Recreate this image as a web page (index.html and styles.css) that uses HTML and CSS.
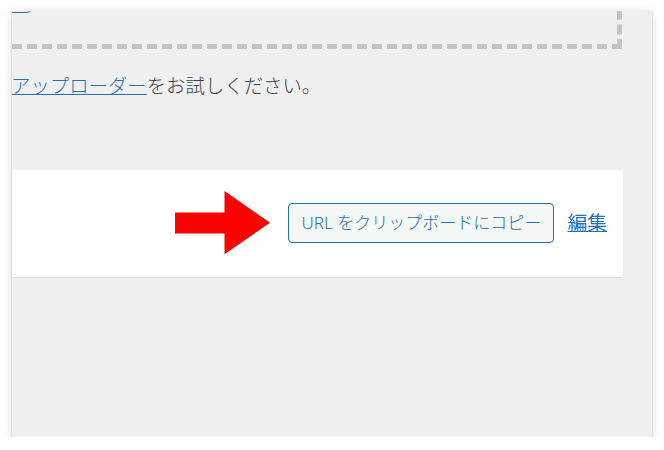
FILE: index.html
```html
<!DOCTYPE html>
<html lang="ja">
<head>
<meta charset="utf-8">
<title>メディアのアップロード</title>
<link rel="stylesheet" href="styles.css">
</head>
<body>
  <div class="panel">
    <div class="dropzone">
      <span class="select-btn"></span>
    </div>
    <p class="bypass"><a href="#" class="link">アップローダー</a>をお試しください。</p>
    <div class="media-item">
      <svg class="arrow" width="95" height="64" viewBox="0 0 95 64" aria-hidden="true">
        <path d="M0 21.5H49.5V0L95 31.7 49.5 63.3V42.5H0Z" fill="#ff0000"/>
      </svg>
      <button class="copy-btn" type="button">URL をクリップボードにコピー</button>
      <a href="#" class="edit-link">編集</a>
    </div>
  </div>
</body>
</html>
```
FILE: styles.css
```css
html, body {
  margin: 0;
  padding: 0;
  background: #ffffff;
}

body {
  font-family: "Noto Sans", "Noto Sans CJK JP", sans-serif;
  color: #3c434a;
}

.panel {
  margin: 11px 0 0 12px;
  width: 640px;
  height: 426px;
  background: #f0f0f1;
  overflow: hidden;
  box-shadow: 0 1px 2px rgba(0, 0, 0, 0.2), 0 2px 10px rgba(0, 0, 0, 0.14);
}

.dropzone {
  box-sizing: border-box;
  height: 200px;
  margin: -162.3px 30px 0 -300px;
  border: 5.33px dashed #c3c4c7;
  padding: 119.5px 0 0 164px;
}

.select-btn {
  display: block;
  box-sizing: border-box;
  width: 150px;
  height: 40px;
  border: 1.33px solid #2271b1;
  border-radius: 4px;
}

.bypass {
  margin: 23px 0 0 -1px;
  font-size: 19.4px;
  line-height: 28px;
  white-space: nowrap;
  font-weight: 300;
}

.link {
  color: #2271b1;
  text-decoration: underline;
}

.media-item {
  box-sizing: border-box;
  height: 108px;
  margin: 70px 29px 0 -20px;
  background: #ffffff;
  border-bottom: 1.5px solid #dcdcde;
  display: flex;
  align-items: center;
  justify-content: flex-end;
  padding: 0 16px 0 0;
}

.arrow {
  display: block;
  margin: -1px 18px 0 0;
}

.copy-btn {
  box-sizing: border-box;
  height: 40px;
  width: 266px;
  padding: 0 12px;
  font-family: "Noto Sans", "Noto Sans CJK JP", sans-serif;
  font-size: 17px;
  font-weight: 300;
  line-height: 38px;
  color: #2271b1;
  background: #f6f7f7;
  border: 1.33px solid #2271b1;
  border-radius: 4px;
  white-space: nowrap;
}

.edit-link {
  margin-left: 13px;
  font-size: 19.8px;
  line-height: 28px;
  color: #2271b1;
  text-decoration: underline;
}
```
